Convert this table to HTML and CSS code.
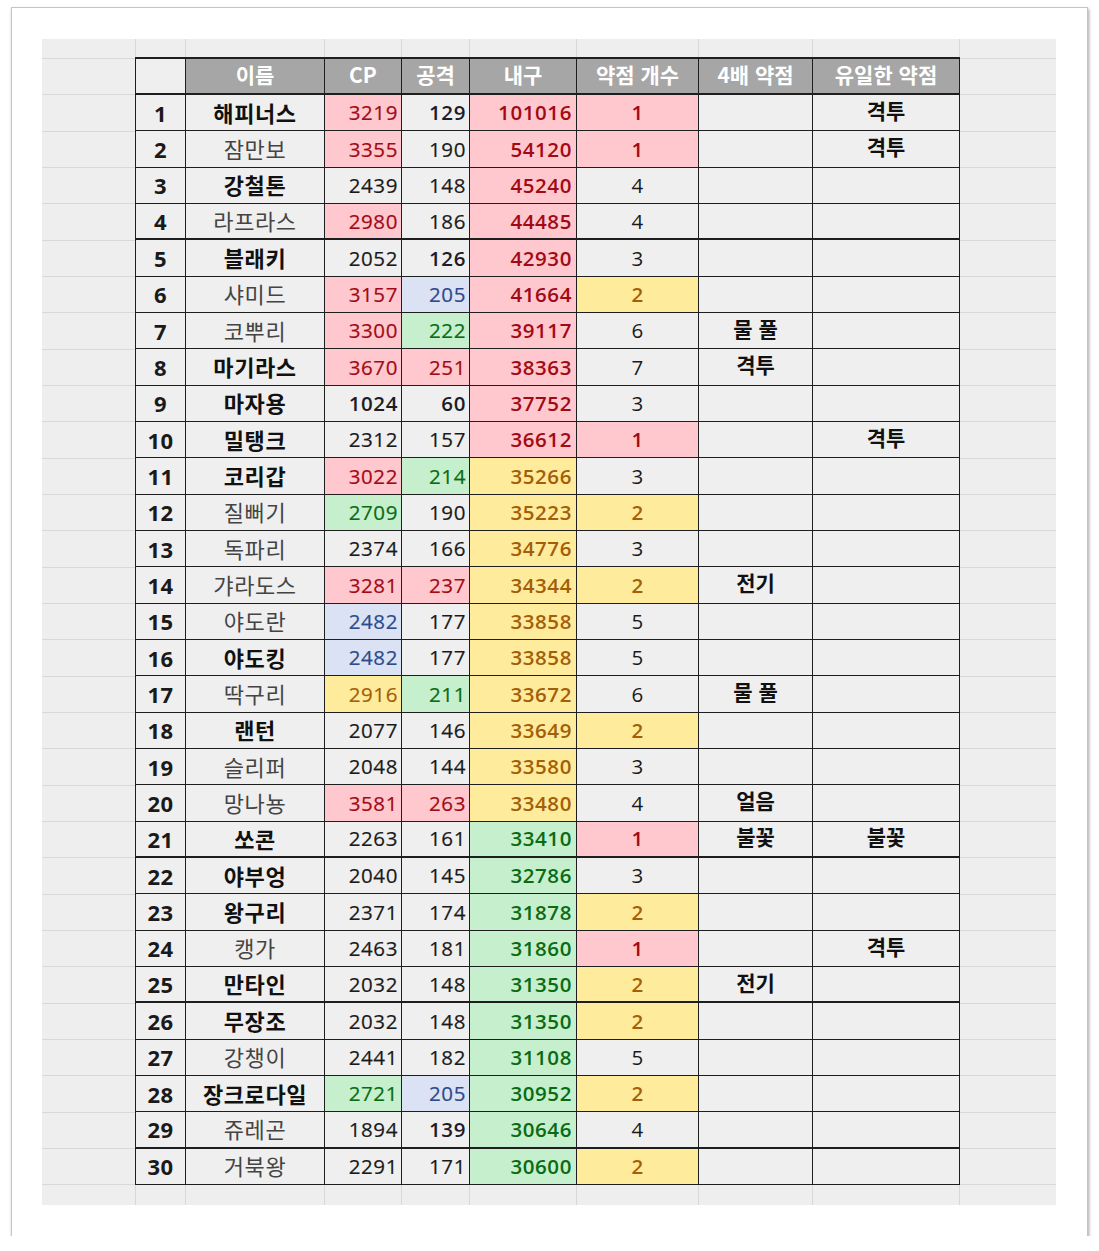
FILE: index.html
```html
<!DOCTYPE html>
<html lang="ko">
<head>
<meta charset="utf-8">
<title>내구 순위</title>
<link rel="stylesheet" href="styles.css">
</head>
<body>
<div class="paper">
  <div class="sheet">
    <div class="tbl">
      <div class="row head sep"><div class="corner"></div><div class="h">이름</div><div class="h">CP</div><div class="h">공격</div><div class="h">내구</div><div class="h">약점 개수</div><div class="h">4배 약점</div><div class="h">유일한 약점</div></div>
      <div class="row"><div class="n">1</div><div class="nm b">해피너스</div><div class="v r">3219</div><div class="v k">129</div><div class="v d r">101016</div><div class="c s r">1</div><div class="t"></div><div class="t">격투</div></div>
      <div class="row"><div class="n">2</div><div class="nm">잠만보</div><div class="v r">3355</div><div class="v">190</div><div class="v d r">54120</div><div class="c s r">1</div><div class="t"></div><div class="t">격투</div></div>
      <div class="row"><div class="n">3</div><div class="nm b">강철톤</div><div class="v">2439</div><div class="v">148</div><div class="v d r">45240</div><div class="c">4</div><div class="t"></div><div class="t"></div></div>
      <div class="row sep"><div class="n">4</div><div class="nm">라프라스</div><div class="v r">2980</div><div class="v">186</div><div class="v d r">44485</div><div class="c">4</div><div class="t"></div><div class="t"></div></div>
      <div class="row"><div class="n">5</div><div class="nm b">블래키</div><div class="v">2052</div><div class="v k">126</div><div class="v d r">42930</div><div class="c">3</div><div class="t"></div><div class="t"></div></div>
      <div class="row"><div class="n">6</div><div class="nm">샤미드</div><div class="v r">3157</div><div class="v bl">205</div><div class="v d r">41664</div><div class="c s y">2</div><div class="t"></div><div class="t"></div></div>
      <div class="row"><div class="n">7</div><div class="nm">코뿌리</div><div class="v r">3300</div><div class="v g">222</div><div class="v d r">39117</div><div class="c">6</div><div class="t">물 풀</div><div class="t"></div></div>
      <div class="row"><div class="n">8</div><div class="nm b">마기라스</div><div class="v r">3670</div><div class="v r">251</div><div class="v d r">38363</div><div class="c">7</div><div class="t">격투</div><div class="t"></div></div>
      <div class="row"><div class="n">9</div><div class="nm b">마자용</div><div class="v k">1024</div><div class="v k">60</div><div class="v d r">37752</div><div class="c">3</div><div class="t"></div><div class="t"></div></div>
      <div class="row"><div class="n">10</div><div class="nm b">밀탱크</div><div class="v">2312</div><div class="v">157</div><div class="v d r">36612</div><div class="c s r">1</div><div class="t"></div><div class="t">격투</div></div>
      <div class="row"><div class="n">11</div><div class="nm b">코리갑</div><div class="v r">3022</div><div class="v g">214</div><div class="v d y">35266</div><div class="c">3</div><div class="t"></div><div class="t"></div></div>
      <div class="row"><div class="n">12</div><div class="nm">질뻐기</div><div class="v g">2709</div><div class="v">190</div><div class="v d y">35223</div><div class="c s y">2</div><div class="t"></div><div class="t"></div></div>
      <div class="row"><div class="n">13</div><div class="nm">독파리</div><div class="v">2374</div><div class="v">166</div><div class="v d y">34776</div><div class="c">3</div><div class="t"></div><div class="t"></div></div>
      <div class="row"><div class="n">14</div><div class="nm">갸라도스</div><div class="v r">3281</div><div class="v r">237</div><div class="v d y">34344</div><div class="c s y">2</div><div class="t">전기</div><div class="t"></div></div>
      <div class="row"><div class="n">15</div><div class="nm">야도란</div><div class="v bl">2482</div><div class="v">177</div><div class="v d y">33858</div><div class="c">5</div><div class="t"></div><div class="t"></div></div>
      <div class="row"><div class="n">16</div><div class="nm b">야도킹</div><div class="v bl">2482</div><div class="v">177</div><div class="v d y">33858</div><div class="c">5</div><div class="t"></div><div class="t"></div></div>
      <div class="row"><div class="n">17</div><div class="nm">딱구리</div><div class="v y">2916</div><div class="v g">211</div><div class="v d y">33672</div><div class="c">6</div><div class="t">물 풀</div><div class="t"></div></div>
      <div class="row"><div class="n">18</div><div class="nm b">랜턴</div><div class="v">2077</div><div class="v">146</div><div class="v d y">33649</div><div class="c s y">2</div><div class="t"></div><div class="t"></div></div>
      <div class="row"><div class="n">19</div><div class="nm">슬리퍼</div><div class="v">2048</div><div class="v">144</div><div class="v d y">33580</div><div class="c">3</div><div class="t"></div><div class="t"></div></div>
      <div class="row"><div class="n">20</div><div class="nm">망나뇽</div><div class="v r">3581</div><div class="v r">263</div><div class="v d y">33480</div><div class="c">4</div><div class="t">얼음</div><div class="t"></div></div>
      <div class="row sep"><div class="n">21</div><div class="nm b">쏘콘</div><div class="v">2263</div><div class="v">161</div><div class="v d g">33410</div><div class="c s r">1</div><div class="t">불꽃</div><div class="t">불꽃</div></div>
      <div class="row"><div class="n">22</div><div class="nm b">야부엉</div><div class="v">2040</div><div class="v">145</div><div class="v d g">32786</div><div class="c">3</div><div class="t"></div><div class="t"></div></div>
      <div class="row"><div class="n">23</div><div class="nm b">왕구리</div><div class="v">2371</div><div class="v">174</div><div class="v d g">31878</div><div class="c s y">2</div><div class="t"></div><div class="t"></div></div>
      <div class="row"><div class="n">24</div><div class="nm">캥가</div><div class="v">2463</div><div class="v">181</div><div class="v d g">31860</div><div class="c s r">1</div><div class="t"></div><div class="t">격투</div></div>
      <div class="row sep"><div class="n">25</div><div class="nm b">만타인</div><div class="v">2032</div><div class="v">148</div><div class="v d g">31350</div><div class="c s y">2</div><div class="t">전기</div><div class="t"></div></div>
      <div class="row"><div class="n">26</div><div class="nm b">무장조</div><div class="v">2032</div><div class="v">148</div><div class="v d g">31350</div><div class="c s y">2</div><div class="t"></div><div class="t"></div></div>
      <div class="row"><div class="n">27</div><div class="nm">강챙이</div><div class="v">2441</div><div class="v">182</div><div class="v d g">31108</div><div class="c">5</div><div class="t"></div><div class="t"></div></div>
      <div class="row"><div class="n">28</div><div class="nm b">장크로다일</div><div class="v g">2721</div><div class="v bl">205</div><div class="v d g">30952</div><div class="c s y">2</div><div class="t"></div><div class="t"></div></div>
      <div class="row sep"><div class="n">29</div><div class="nm">쥬레곤</div><div class="v">1894</div><div class="v k">139</div><div class="v d g">30646</div><div class="c">4</div><div class="t"></div><div class="t"></div></div>
      <div class="row"><div class="n">30</div><div class="nm">거북왕</div><div class="v">2291</div><div class="v">171</div><div class="v d g">30600</div><div class="c s y">2</div><div class="t"></div><div class="t"></div></div>
    </div>
  </div>
</div>
</body>
</html>
```

FILE: styles.css
```css
html, body {
  margin: 0;
  background: #ffffff;
}

.paper {
  margin: 8px 0 0 12px;
  width: 1075px;
  height: 1228px;
  box-sizing: border-box;
  padding: 31px 0 0 30px;
  background: #ffffff;
  box-shadow: 0 0 0 1px #c4c4c4, 1px 2px 3px 1px rgba(0, 0, 0, 0.35);
}

.sheet {
  width: 1014px;
  height: 1166px;
  box-sizing: border-box;
  padding: 18px 0 0 93px;
  background-color: #eeeeee;
  background-image:
    linear-gradient(to right,
      transparent 0 93px, #d8d8d8 93px 94px,
      transparent 94px 143px, #d8d8d8 143px 144px,
      transparent 144px 282px, #d8d8d8 282px 283px,
      transparent 283px 359px, #d8d8d8 359px 360px,
      transparent 360px 427px, #d8d8d8 427px 428px,
      transparent 428px 534px, #d8d8d8 534px 535px,
      transparent 535px 656px, #d8d8d8 656px 657px,
      transparent 657px 770px, #d8d8d8 770px 771px,
      transparent 771px 917px, #d8d8d8 917px 918px,
      transparent 918px),
    repeating-linear-gradient(to bottom, #d8d8d8 0 1px, transparent 1px 36.33px);
  background-repeat: no-repeat, no-repeat;
  background-position: 0 0, 0 19px;
}

.tbl {
  display: grid;
  grid-template-columns: 50px 139px 77px 68px 107px 122px 114px 147px;
  grid-template-rows: 36px repeat(30, 36.33px);
  width: max-content;
  border-left: 1px solid #1e1e1e;
  border-top: 2px solid #1e1e1e;
  background: #efefef;
  font-family: "Open Sans", "Noto Sans CJK KR", sans-serif;
  font-size: 20.5px;
  font-weight: 400;
  color: #1a1a1a;
}

.row {
  display: contents;
}

.row > div {
  box-sizing: border-box;
  border-right: 1px solid #1e1e1e;
  border-bottom: 1px solid #1e1e1e;
  display: flex;
  align-items: center;
  justify-content: center;
  line-height: 1;
  white-space: nowrap;
  overflow: hidden;
  background: #efefef;
}

.row.sep > div {
  border-bottom-width: 2px;
}

.head .h {
  background: #a6a6a6;
  color: #ffffff;
  font-family: "Noto Sans CJK KR", sans-serif;
  font-size: 21px;
  font-weight: 700;
  padding-bottom: 3px;
}

.head .corner {
  background: #efefef;
}

.n {
  font-size: 22px;
  font-weight: 700;
  letter-spacing: 0.5px;
  color: #1a1a1a;
}

.nm {
  font-family: "Noto Sans CJK KR", sans-serif;
  font-size: 22px;
  font-weight: 400;
  letter-spacing: 0.6px;
  color: #444444;
  padding-bottom: 2px;
}

.nm.b {
  font-weight: 700;
  color: #111111;
}

.v {
  justify-content: flex-end !important;
  padding-right: 3px;
  letter-spacing: 0.6px;
  -webkit-text-stroke: 0.2px currentColor;
}

.v.d {
  font-weight: 600;
  padding-right: 4px;
  -webkit-text-stroke: 0;
}

.v.k {
  font-weight: 600;
  color: #1c1c2a;
  -webkit-text-stroke: 0;
}

.c {
  letter-spacing: 0.5px;
}

.c.s {
  font-weight: 600;
}

.t {
  font-family: "Noto Sans CJK KR", sans-serif;
  font-size: 21px;
  font-weight: 700;
  color: #111111;
  padding-bottom: 4px;
}

.row > .r {
  background: #ffc7ce;
  color: #a10a14;
}

.row > .y {
  background: #ffeb9c;
  color: #a35e08;
}

.row > .g {
  background: #c6efce;
  color: #0a6b12;
}

.row > .bl {
  background: #dbe2f4;
  color: #2d4a8a;
}
```
